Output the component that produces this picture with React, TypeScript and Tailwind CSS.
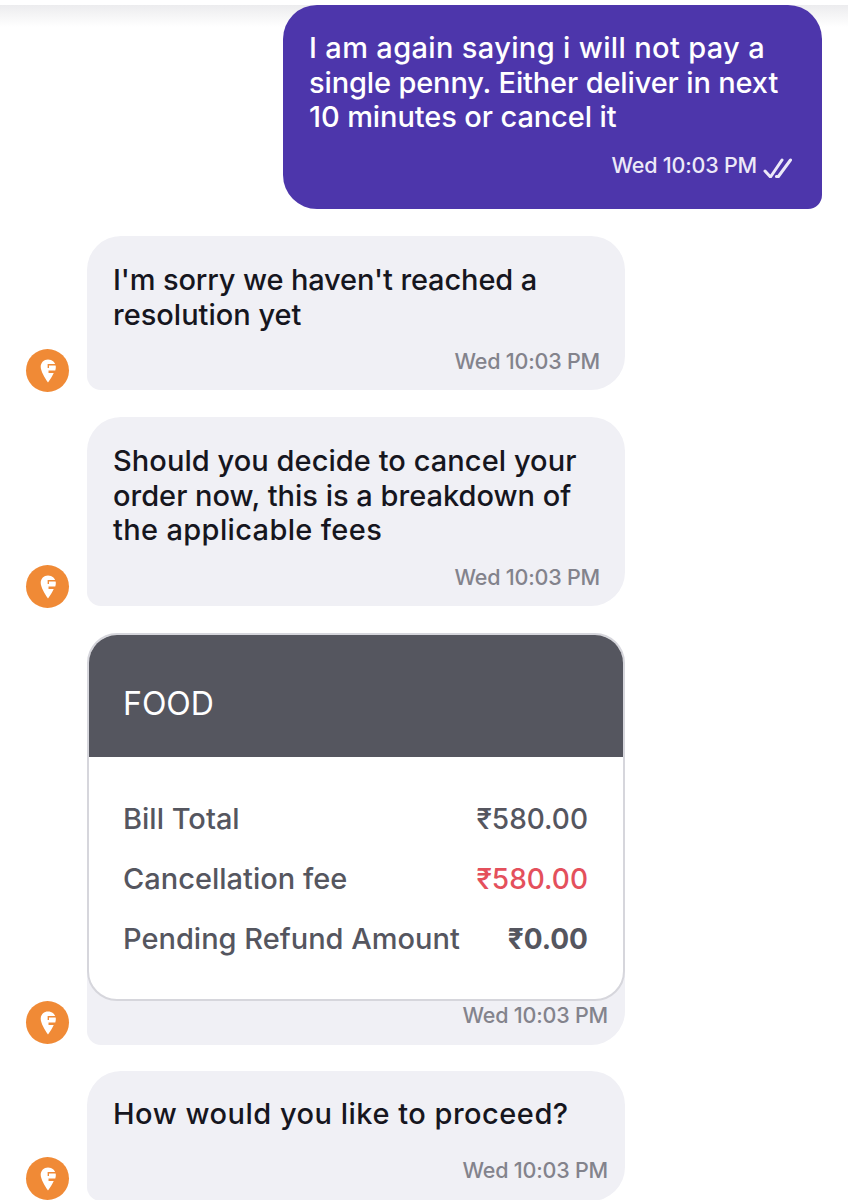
const FONT = "font-['Inter','Liberation_Sans',sans-serif]";

function Avatar() {
  return (
    <div className="w-[43px] h-[43px] rounded-full bg-[#f08a36] flex items-center justify-center shrink-0">
      <svg width="16" height="24" viewBox="0 0 15 23">
        <path d="M7.500.5C3.500.5.5 3.500.5 7.500c0 4 4 11 7 15 2-2.500 4-6 5.500-9H8V11h6.500c.4-1.200.5-2.500.5-3.500C15 3.500 11.500.5 7.500.5z" fill="#fff" />
        <path d="M15.500 5.500H7.800v3.200" fill="none" stroke="#f08a36" strokeWidth="1.300" />
      </svg>
    </div>
  );
}

function Time({ children, className }: { children: string; className: string }) {
  return <div className={`text-[21.500px] leading-[26px] text-right text-[#83838c] font-medium tracking-[-0.2px] ${className}`}>{children}</div>;
}

type Line = [string, string];

function Incoming({ lines, timeClass, bubbleClass }: { lines: Line[]; timeClass: string; bubbleClass: string }) {
  return (
    <div className="flex items-end gap-[18px] pl-[26px]">
      <div className="-mb-[2px]"><Avatar /></div>
      <div className={`w-[538px] bg-[#f0f0f5] rounded-[34px] rounded-bl-[14px] pl-[26px] ${bubbleClass}`}>
        <div className="text-[29px] leading-[34.500px] font-medium text-[#16161e]">
          {lines.map(([l, c]) => <div key={l} className={`whitespace-nowrap ${c}`}>{l}</div>)}
        </div>
        <Time className={timeClass}>Wed 10:03 PM</Time>
      </div>
    </div>
  );
}

function Row({ label, value, valueClass }: { label: string; value: string; valueClass: string }) {
  return (
    <div className="flex justify-between items-center h-[60px] text-[#55565f] text-[29px] font-medium">
      <span>{label}</span>
      <span className={`text-[28px] ${valueClass}`}>{value}</span>
    </div>
  );
}

export default function App() {
  return (
    <div className={`w-[848px] h-[1200px] bg-white overflow-hidden relative pt-[5px] ${FONT}`}>
      <div className="absolute top-[5px] left-0 right-0 h-[22px] bg-gradient-to-b from-[#ececee] to-white" />
      <div className="relative flex flex-col">
        <div className="self-end mr-[26px] w-[539px] h-[204px] bg-[#4d36ab] rounded-[34px] rounded-br-[14px] pl-[26px] pr-[29px] pt-[26px] text-white">
          <div className="text-[29px] leading-[34.500px] font-medium">
            <div className="whitespace-nowrap tracking-[0.35px]">I am again saying i will not pay a</div>
            <div className="whitespace-nowrap tracking-[-0.14px]">single penny. Either deliver in next</div>
            <div className="whitespace-nowrap tracking-[-0.1px]">10 minutes or cancel it</div>
          </div>
          <div className="flex justify-end items-center gap-[6px] mt-[17px] text-[21.500px] leading-[26px] text-[#ece9f8] font-medium tracking-[-0.2px]">
            <span>Wed 10:03 PM</span>
            <svg width="30" height="26" viewBox="0 0 30 26" fill="none" stroke="#ece9f8" strokeWidth="3" strokeLinecap="round" strokeLinejoin="round">
              <path d="M2 19l5.500 6L19 8" />
              <path d="M13.500 24.500l1.500.5L27.500 8" />
            </svg>
          </div>
        </div>

        <div className="mt-[27px]">
          <Incoming
            lines={[["I'm sorry we haven't reached a", "tracking-[-0.13px]"], ["resolution yet", ""]]}
            bubbleClass="h-[154px] pt-[27px] pr-[25px]"
            timeClass="mt-[16px]"
          />
        </div>
        <div className="mt-[27px]">
          <Incoming
            lines={[
              ["Should you decide to cancel your", "tracking-[0.06px]"],
              ["order now, this is a breakdown of", ""],
              ["the applicable fees", "tracking-[0.35px]"],
            ]}
            bubbleClass="h-[189px] pt-[27px] pr-[25px]"
            timeClass="mt-[16px]"
          />
        </div>

        <div className="mt-[27px] flex items-end gap-[18px] pl-[26px]">
          <div className="mb-[1px]"><Avatar /></div>
          <div className="w-[538px] h-[412px] bg-[#f0f0f5] rounded-[34px] rounded-bl-[14px]">
            <div className="h-[368px] bg-white border-[2px] border-[#d6d6dc] rounded-[30px] overflow-hidden">
              <div className="h-[122px] bg-[#55565f] flex items-center pl-[34px] pt-[16px] text-white text-[32px]">FOOD</div>
              <div className="pl-[34px] pr-[35px] pt-[32px]">
                <Row label="Bill Total" value="₹580.00" valueClass="font-medium text-[#55565f]" />
                <Row label="Cancellation fee" value="₹580.00" valueClass="font-medium text-[#e4505c]" />
                <Row label="Pending Refund Amount" value="₹0.00" valueClass="text-[#55565f] font-bold" />
              </div>
            </div>
            <Time className="pr-[17px] mt-[1px]">Wed 10:03 PM</Time>
          </div>
        </div>

        <div className="mt-[26px] flex items-end gap-[18px] pl-[26px]">
          <div className="mb-[1px]"><Avatar /></div>
          <div className="w-[538px] h-[130px] bg-[#f0f0f5] rounded-[34px] rounded-bl-[14px] pl-[26px] pt-[26px] pr-[17px]">
            <div className="text-[29px] leading-[34.500px] font-medium text-[#16161e] whitespace-nowrap tracking-[0.5px]">How would you like to proceed?</div>
            <Time className="mt-[25px]">Wed 10:03 PM</Time>
          </div>
        </div>
      </div>
    </div>
  );
}
